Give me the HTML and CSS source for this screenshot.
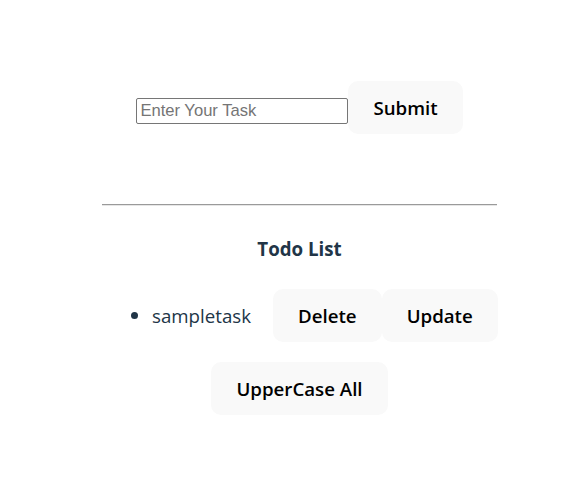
FILE: index.html
```html
<!DOCTYPE html>
<html lang="en">
<head>
<meta charset="utf-8">
<title>Todo</title>
<link rel="stylesheet" href="styles.css">
</head>
<body>
<div class="app">
  <form class="task-form">
    <input class="task-input" type="text" placeholder="Enter Your Task"><button class="btn" type="button">Submit</button>
  </form>
  <hr class="divider">
  <h4 class="title">Todo List</h4>
  <ul class="todo-list">
    <li class="todo-item"><span class="todo-text">sampletask</span><button class="btn" type="button">Delete</button><button class="btn" type="button">Update</button></li>
  </ul>
  <button class="btn" type="button">UpperCase All</button>
</div>
</body>
</html>
```

FILE: styles.css
```css
html, body {
  margin: 0;
  background: #ffffff;
}

body {
  font-family: "Open Sans", "Noto Sans", sans-serif;
  color: #213547;
  font-size: 18.7px;
}

.app {
  padding: 81px 0 40px 23px;
  text-align: center;
}

.task-form {
  display: flex;
  justify-content: center;
  align-items: baseline;
  margin: 0;
}

.task-input {
  box-sizing: border-box;
  width: 212px;
  height: 26px;
  padding: 1px 3px;
  border: 1px solid #767676;
  border-radius: 2px;
  font-family: "Liberation Sans", Arial, sans-serif;
  font-size: 16.6px;
  color: #000;
  position: relative;
  top: 1px;
}

.task-input::placeholder {
  color: #757575;
}

.btn {
  border-radius: 10px;
  border: 1px solid transparent;
  padding: 12px 24px;
  font-family: "Open Sans", "Noto Sans", sans-serif;
  font-size: 18.7px;
  font-weight: 600;
  line-height: 27px;
  background: #f9f9f9;
  color: #000;
  cursor: pointer;
}

.divider {
  width: 395px;
  margin: 70px auto 0;
  border: 0;
  border-top: 1px solid #9a9a9a;
  border-bottom: 1px solid #e6e6e6;
}

.title {
  margin: 30px 0 0;
  font-size: 18.7px;
  font-weight: 700;
  line-height: 26px;
}

.todo-list {
  width: 345px;
  margin: 27px auto 0;
  padding: 0 0 0 50px;
  text-align: left;
  white-space: nowrap;
}

.todo-item {
  line-height: 26px;
}

.todo-item::marker {
  font-size: 20px;
}

.todo-text {
  display: inline-block;
  margin-right: 22px;
  vertical-align: baseline;
}

.todo-list + .btn {
  margin-top: 20px;
}
```
